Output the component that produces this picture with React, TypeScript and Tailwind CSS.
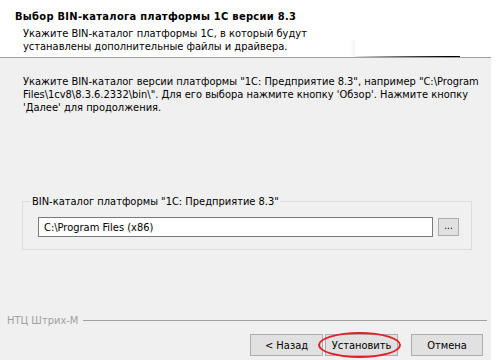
import React from "react";

const font = { fontFamily: '"DejaVu Sans Condensed", "DejaVu Sans", "Liberation Sans", sans-serif' };

export default function App() {
  return (
    <div className="w-[501px] h-[360px] bg-white flex overflow-hidden text-[11px] leading-[13px] text-black" style={font}>
      <div className="w-[491px] h-[360px] flex flex-col bg-[#f0f0f0]">
        {/* Header */}
        <div className="relative h-[58px] bg-white border-b border-[#a0a0a0] shrink-0">
          <div className="pl-[15px] pt-[10px] font-bold tracking-[0.3px] whitespace-nowrap">Выбор BIN-каталога платформы 1С версии 8.3</div>
          <div className="pl-[23px] pt-[4px] whitespace-nowrap">
            Укажите BIN-каталог платформы 1С, в который будут
            <br />
            устанавлены дополнительные файлы и драйвера.
          </div>
          <div className="absolute left-[350px] top-[40px] w-[5px] h-[16px] bg-gradient-to-r from-white to-[#f4f4f4]" />
          <div className="absolute left-[355px] top-[56px] w-[105px] h-[1px] bg-gradient-to-r from-[#e8e8e8] via-[#505050] to-black" />
        </div>

        {/* Body */}
        <div className="flex-1 flex flex-col">
          <div className="pl-[23px] pt-[17px] whitespace-nowrap">
            Укажите BIN-каталог версии платформы "1C: Предприятие 8.3", например "C:\Program
            <br />
            Files\1cv8\8.3.6.2332\bin\". Для его выбора нажмите кнопку 'Обзор'. Нажмите кнопку
            <br />
            'Далее' для продолжения.
          </div>

          {/* Group box */}
          <div className="ml-[22px] mt-[87px] w-[450px] h-[49px] border border-[#dcdcdc] relative">
            <div className="absolute left-[8px] top-[-7px] px-[1px] bg-[#f0f0f0] whitespace-nowrap">
              BIN-каталог платформы "1С: Предприятие 8.3"
            </div>
            <div className="flex items-center mt-[15px] ml-[15px] gap-[5px]">
              <div className="w-[395px] h-[20px] bg-white border border-[#7a7a7a] flex items-center pl-[5px] whitespace-nowrap">
                C:\Program Files (x86)
              </div>
              <div className="w-[21px] h-[18px] bg-[#e1e1e1] border border-[#adadad] flex items-center justify-center text-[10px] leading-none pb-[2px]">
                ...
              </div>
            </div>
          </div>

          {/* Footer */}
          <div className="mt-[64px] flex items-center pl-[7px] pr-[4px]">
            <span className="text-[#a0a0a0] whitespace-nowrap">НТЦ Штрих-М</span>
            <div className="flex-1 h-[1px] bg-[#a0a0a0] ml-[5px]" />
          </div>
          <div className="mt-[7px] flex pl-[250px]">
            <div className="w-[73px] h-[22px] bg-[#e1e1e1] border border-[#adadad] flex items-center justify-center">&lt; Назад</div>
            <div className="relative ml-[2px] w-[73px] h-[22px] bg-[#e1e1e1] border border-[#adadad] flex items-center justify-center">
              Установить
              <div className="absolute left-[-8px] top-[-3px] w-[83px] h-[26px] rounded-[50%] border-[2px] border-[#e0202a]" />
            </div>
            <div className="ml-[13px] w-[72px] h-[22px] bg-[#e1e1e1] border border-[#adadad] flex items-center justify-center">Отмена</div>
          </div>
        </div>
      </div>
    </div>
  );
}
